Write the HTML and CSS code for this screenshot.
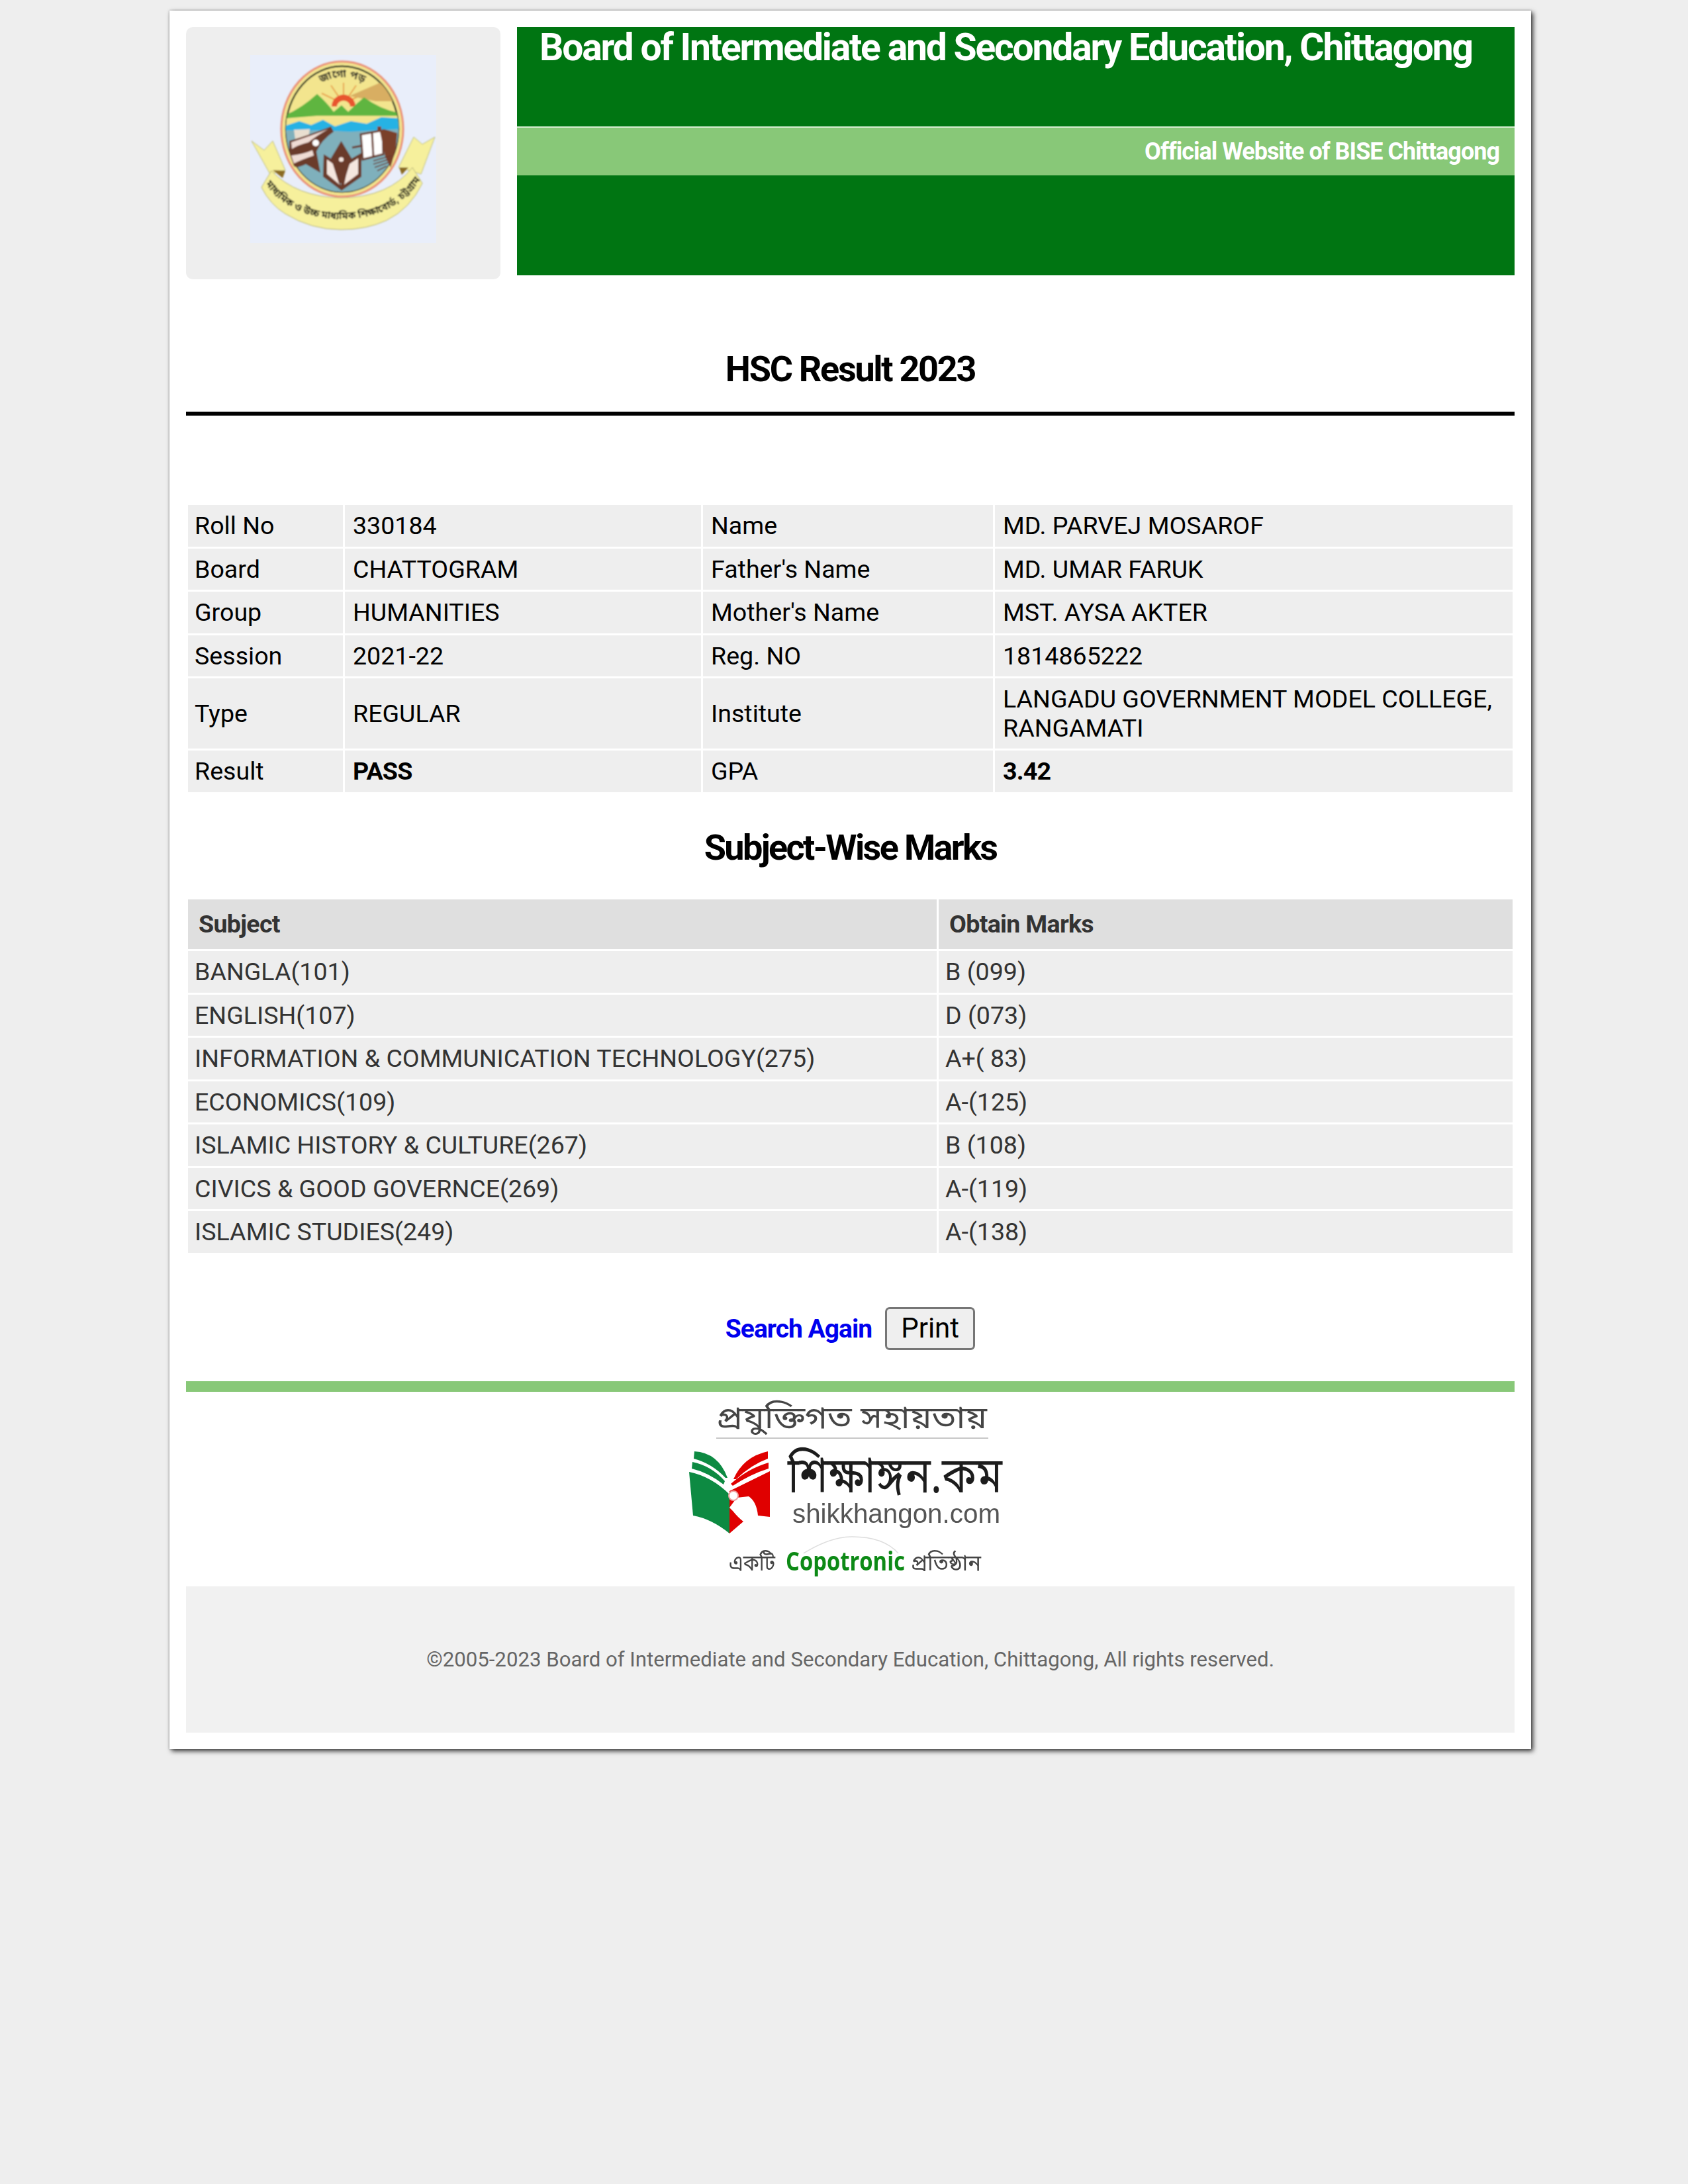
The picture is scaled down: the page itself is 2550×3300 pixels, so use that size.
FILE: index.html
```html
<!DOCTYPE html>
<html lang="en">
<head>
<meta charset="utf-8">
<title>HSC Result 2023</title>
<link rel="stylesheet" href="styles.css">
</head>
<body>
<main class="sheet">
  <header class="top">
    <div class="logo-box">
      <svg class="crest" viewBox="0 0 281 284" width="281" height="284">
        <defs>
          <filter id="soft"><feGaussianBlur stdDeviation="0.8"/></filter>
          <clipPath id="oval"><ellipse cx="139" cy="112" rx="85" ry="95"/></clipPath>
          <path id="topArc" d="M100 46 Q139 22 178 46"/>
          <path id="botArc" d="M24 196 Q62 248 138 248 Q216 248 256 190"/>
        </defs>
        <rect width="281" height="284" fill="#e9eefa"/>
        <g filter="url(#soft)">
          <path d="M2 130 L21 144 L34 130 L53 174 L30 180 Z" fill="#f6f09c" stroke="#bdbd80"/>
          <path d="M279 124 L260 135 L247 124 L224 170 L258 180 Z" fill="#f6f09c" stroke="#bdbd80"/>
          <path d="M32 175 L17 200 Q30 226 53 240 Q92 264 137 264 Q176 264 206 250 Q242 232 260 194 L245 170 Q210 215 138 216 Q70 215 32 175 Z" fill="#f6f09c" stroke="#b5b478"/>
          <path d="M34 174 L53 175 L49 186 Z" fill="#8a6a22"/>
          <path d="M225 170 L239 170 L229 181 Z" fill="#8a6a22"/>
          <ellipse cx="139" cy="112" rx="92" ry="102" fill="#f3e58e" stroke="#ea9078" stroke-width="3"/>
          <ellipse cx="139" cy="112" rx="85" ry="95" fill="#f3e58e" stroke="#1c2a1c" stroke-width="2.5"/>
          <g clip-path="url(#oval)">
            <path d="M141 74 L141 42 M141 74 L122 46 M141 74 L160 46 M141 74 L108 58 M141 74 L176 56" stroke="#e8a24c" stroke-width="2"/>
            <path d="M150 62 L196 42 L226 70 L190 70 Z" fill="#d8ae62"/>
            <path d="M123 78 A18 18 0 0 1 159 78 Z" fill="#e8552e"/>
            <path d="M131 78 A10 9 0 0 1 151 78 Z" fill="#f3e58e"/>
            <path d="M50 92 Q76 82 101 59 Q116 72 126 86 L138 76 L148 86 Q160 74 172 64 Q196 82 226 88 L226 104 L150 96 L100 102 L50 100 Z" fill="#5fb540"/>
            <path d="M50 96 L100 92 L150 92 L226 92 L226 112 L50 112 Z" fill="#f3e58e"/>
            <path d="M50 108 L74 100 L92 106 L110 98 L128 108 L152 100 L176 104 L198 94 L226 96 L226 118 L50 118 Z" fill="#27b2e4"/>
            <path d="M50 114 L110 114 L150 116 L226 112 L226 220 L50 220 Z" fill="#7fb0bc"/>
          </g>
          <path d="M66 113 L90 112 L88 126 L68 128 Z" fill="#e9dfd0"/>
          <path d="M59 130 Q92 120 122 108 L126 116 Q108 128 100 146 L106 178 L84 165 Q70 172 66 168 L59 148 Z" fill="#6b3a2c"/>
          <path d="M62 132 Q92 122 118 112 Q100 122 88 132 Q72 136 63 142 Z" fill="#efdcd4"/>
          <path d="M62 152 Q80 150 94 144 L96 152 Q78 158 66 164 Z" fill="#efdcd4"/>
          <circle cx="99" cy="133" r="5" fill="#fff"/>
          <path d="M111 150 L130 162 L137 198 L144 162 L168 148 L168 184 L138 205 L110 184 Z" fill="#6b3a2c"/>
          <path d="M116 158 L130 168 L135 196 L116 180 Z" fill="#f5e6de"/>
          <path d="M163 156 L148 166 L142 196 L163 180 Z" fill="#f5e6de"/>
          <path d="M137.500 130 L153 156 L141 194 L134 194 L122 156 Z" fill="#6b3a2c"/>
          <circle cx="137.500" cy="158" r="3.500" fill="#f5e6de"/>
          <path d="M167 120 L200 114 L201 150 L170 158 Z" fill="#fff" stroke="#6b3a2c" stroke-width="3"/>
          <path d="M184 117 L186 154" stroke="#6b3a2c" stroke-width="3"/>
          <path d="M196 116 L202 112 L222 118 L220 142 L212 170 L204 154 Z" fill="#7a3f2c"/>
          <path d="M192 116 L192 108 L198 108 L198 116 Z" fill="#7a3f2c"/>
          <path d="M154 140 L170 137" stroke="#6b3a2c" stroke-width="3"/>
          <path d="M186 160 L214 152 M186 165 L212 157 M188 170 L210 162 M192 175 L206 168" stroke="#6b3a2c" stroke-width="1.800"/>
          <text class="crest-top" font-size="16"><textPath href="#topArc" startOffset="50%" text-anchor="middle">জাগো পড়</textPath></text>
          <text class="crest-band" font-size="15"><textPath href="#botArc" startOffset="50%" text-anchor="middle">মাধ্যমিক ও উচ্চ মাধ্যমিক শিক্ষাবোর্ড, চট্টগ্রাম</textPath></text>
        </g>
      </svg>
    </div>
    <div class="banner">
      <h1 class="banner-title">Board of Intermediate and Secondary Education, Chittagong</h1>
      <div class="banner-strip">Official Website of BISE Chittagong</div>
      <div class="banner-foot"></div>
    </div>
  </header>

  <h2 class="page-title">HSC Result 2023</h2>

  <table class="grid info">
    <colgroup><col class="c-a"><col class="c-b"><col class="c-c"><col></colgroup>
    <tr><td>Roll No</td><td>330184</td><td>Name</td><td>MD. PARVEJ MOSAROF</td></tr>
    <tr><td>Board</td><td>CHATTOGRAM</td><td>Father's Name</td><td>MD. UMAR FARUK</td></tr>
    <tr><td>Group</td><td>HUMANITIES</td><td>Mother's Name</td><td>MST. AYSA AKTER</td></tr>
    <tr><td>Session</td><td>2021-22</td><td>Reg. NO</td><td>1814865222</td></tr>
    <tr><td>Type</td><td>REGULAR</td><td>Institute</td><td>LANGADU GOVERNMENT MODEL COLLEGE, RANGAMATI</td></tr>
    <tr><td>Result</td><td class="strong">PASS</td><td>GPA</td><td class="strong">3.42</td></tr>
  </table>

  <h2 class="section-title">Subject-Wise Marks</h2>

  <table class="grid marks">
    <colgroup><col class="c-subject"><col></colgroup>
    <tr><th>Subject</th><th>Obtain Marks</th></tr>
    <tr><td>BANGLA(101)</td><td>B (099)</td></tr>
    <tr><td>ENGLISH(107)</td><td>D (073)</td></tr>
    <tr><td>INFORMATION &amp; COMMUNICATION TECHNOLOGY(275)</td><td>A+( 83)</td></tr>
    <tr><td>ECONOMICS(109)</td><td>A-(125)</td></tr>
    <tr><td>ISLAMIC HISTORY &amp; CULTURE(267)</td><td>B (108)</td></tr>
    <tr><td>CIVICS &amp; GOOD GOVERNCE(269)</td><td>A-(119)</td></tr>
    <tr><td>ISLAMIC STUDIES(249)</td><td>A-(138)</td></tr>
  </table>

  <div class="actions">
    <a class="again" href="#">Search Again</a>
    <button class="print" type="button">Print</button>
  </div>

  <div class="sponsor">
    <svg class="sponsor-art" viewBox="0 0 500 294" width="500" height="294">
      <defs><filter id="soft2"><feGaussianBlur stdDeviation="0.7"/></filter></defs>
      <g filter="url(#soft2)">
        <text class="bn" x="47" y="55" font-size="46" textLength="409" lengthAdjust="spacingAndGlyphs" fill="#444">প্রযুক্তিগত সহায়তায়</text>
        <rect x="47" y="69" width="411" height="2" fill="#c8c8c8"/>
        <path d="M14 90 Q50 92 64 130 L61 130 Q40 108 13 101 Z" fill="#0b8a43"/>
        <path d="M11 106 Q40 112 60 135 L58 140 Q35 122 10 116 Z" fill="#0b8a43"/>
        <path d="M6 121 Q40 128 67 155 L67 214 Q40 192 12 187 Z" fill="#0b8a43"/>
        <path d="M125 90 Q88 98 73 132 L77 132 Q100 110 125 101 Z" fill="#e00000"/>
        <path d="M126 107 Q95 116 69 139 L72 142 Q100 124 126 116 Z" fill="#e00000"/>
        <path d="M128 120 L128 189 L110 187 Q108 166 96 158 L78 160 L67 175 L72 180 Q80 190 88 196 L67 214 L67 150 Z" fill="#e00000"/>
        <circle cx="73" cy="157" r="7" fill="#fff" stroke="#f0a0a0" stroke-width="2"/>
        <text class="bn" x="155" y="152" font-size="76" textLength="324" lengthAdjust="spacingAndGlyphs" fill="#1c1c1c">শিক্ষাঙ্গন.কম</text>
        <text class="latin" x="162" y="198" font-size="41" textLength="314" lengthAdjust="spacingAndGlyphs" fill="#555">shikkhangon.com</text>
        <path d="M179 244 Q220 219 252 219 Q300 219 322 244" fill="none" stroke="#ddd" stroke-width="1.500"/>
        <text class="bn" x="66" y="270" font-size="34" textLength="70" lengthAdjust="spacingAndGlyphs" fill="#444">একটি</text>
        <text class="brand" x="152" y="270" font-size="40" textLength="180" lengthAdjust="spacingAndGlyphs" fill="#108a18">Copotronic</text>
        <text class="bn" x="341" y="270" font-size="34" textLength="106" lengthAdjust="spacingAndGlyphs" fill="#444">প্রতিষ্ঠান</text>
      </g>
    </svg>
  </div>

  <footer class="legal">©2005-2023 Board of Intermediate and Secondary Education, Chittagong, All rights reserved.</footer>
</main>
</body>
</html>
```
FILE: styles.css
```css
html, body { margin: 0; padding: 0; }
body {
  background: #eeeeee;
  font-family: Roboto, "Noto Sans", sans-serif;
  color: #000;
  min-height: 3300px;
  padding: 16px 237px 0 256px;
  box-sizing: border-box;
}
.sheet {
  background: #fff;
  padding: 25px;
  box-shadow: 3px 3px 7px rgba(0, 0, 0, 0.75), 0 0 3px rgba(0, 0, 0, 0.3);
}
.top { display: flex; gap: 25px; align-items: flex-start; }
.logo-box {
  flex: 0 0 475px;
  height: 381px;
  box-sizing: border-box;
  background: #eeeeee;
  border-radius: 10px;
  display: flex;
  align-items: flex-start;
  justify-content: center;
  padding-top: 42px;
}
.crest { display: block; }
.crest-top, .crest-band, .bn { font-family: "Noto Sans Bengali", "Noto Sans", sans-serif; }
.crest-top { fill: #222; font-weight: 700; }
.crest-band { fill: #111; font-weight: 700; }
.banner { flex: 1; display: flex; flex-direction: column; height: 375px; background: #007512; color: #fff; }
.banner-title {
  margin: 0;
  height: 150px;
  box-sizing: border-box;
  padding: 0 34px;
  font-size: 57px;
  line-height: 62px;
  font-weight: 700;
  letter-spacing: -2.2px;
  white-space: nowrap;
}
.banner-strip {
  border-top: 2px solid #d8edd2;
  height: 72px;
  background: #88c878;
  text-align: right;
  padding-right: 23px;
  font-size: 36px;
  font-weight: 700;
  letter-spacing: -1px;
  line-height: 72px;
}
.banner-foot { flex: 1; }
.page-title {
  margin: 100px 0 0;
  padding-bottom: 28px;
  border-bottom: 6px solid #000;
  text-align: center;
  font-size: 54px;
  line-height: 72px;
  font-weight: 700;
  letter-spacing: -2.3px;
}
.grid {
  width: 100%;
  table-layout: fixed;
  border-collapse: separate;
  border-spacing: 3px;
  font-size: 37.6px;
  line-height: 43.5px;
}
.grid td { background: #eeeeee; padding: 10px 10px 9px; vertical-align: middle; }
.info { margin-top: 132px; }
.info td + td { padding-left: 12px; }
.c-a { width: 234px; }
.c-b { width: 538px; }
.c-c { width: 438px; }
.strong { font-weight: 700; letter-spacing: -0.8px; }
.section-title {
  margin: 45px 0 39.5px;
  text-align: center;
  font-size: 54px;
  line-height: 72px;
  font-weight: 700;
  letter-spacing: -2.65px;
}
.marks { color: #333; }
.c-subject { width: 1131px; }
.marks th {
  background: #dfdfdf;
  text-align: left;
  font-weight: 700;
  letter-spacing: -0.7px;
  padding: 15.75px 16px;
}
.actions {
  display: flex;
  justify-content: center;
  align-items: center;
  gap: 20px;
  margin-top: 79.5px;
  height: 65px;
}
.again { color: #0000ee; text-decoration: none; font-size: 39px; font-weight: 700; letter-spacing: -1px; }
.print {
  width: 136px;
  height: 65px;
  box-sizing: border-box;
  border: 3px solid #767676;
  border-radius: 7px;
  background: #efefef;
  color: #000;
  font-family: Roboto, sans-serif;
  font-size: 42px;
  padding: 0 0 3px;
}
.sponsor {
  margin-top: 47px;
  border-top: 16px solid #88c878;
  height: 294px;
  display: flex;
  justify-content: center;
}
.sponsor-art { display: block; }
.latin { font-family: "Liberation Sans", sans-serif; }
.brand { font-family: "Open Sans", sans-serif; font-weight: 700; }
.legal {
  background: #f1f1f1;
  height: 221px;
  line-height: 222px;
  text-align: center;
  font-size: 31.2px;
  color: #666;
}
```
